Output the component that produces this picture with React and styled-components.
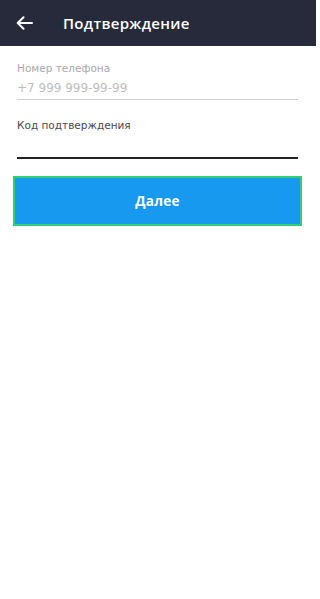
import React from "react";
import styled, { createGlobalStyle } from "styled-components";

const Global = createGlobalStyle`
  html, body { margin: 0; padding: 0; background: #ffffff; }
  body { font-family: "DejaVu Sans", "Noto Sans", sans-serif; }
  * { box-sizing: border-box; }
`;

const Screen = styled.div`
  width: 316px;
  min-height: 599px;
  background: #ffffff;
  display: flex;
  flex-direction: column;
`;

const Header = styled.header`
  height: 46px;
  background: #262a3b;
  display: flex;
  align-items: center;
  padding-left: 16px;
  gap: 30px;
`;

const BackButton = styled.button`
  width: 17px;
  height: 17px;
  padding: 0;
  border: none;
  background: none;
  display: flex;
  align-items: center;
  justify-content: center;
  color: #ffffff;
`;

const Title = styled.h1`
  margin: 0;
  font-family: "Open Sans", "Noto Sans", sans-serif;
  font-size: 15px;
  font-weight: 600;
  color: #ffffff;
  letter-spacing: 0.3px;
`;

const Form = styled.div`
  display: flex;
  flex-direction: column;
  padding: 15px 18px 0 17px;
`;

const Field = styled.div`
  display: flex;
  flex-direction: column;
  margin-bottom: ${(p) => p.$mb || 0}px;
`;

const Label = styled.label`
  font-size: 10.5px;
  line-height: 14px;
  color: ${(p) => (p.$muted ? "#a9a9a9" : "#4a4a4a")};
`;

const Value = styled.div`
  font-size: 12px;
  line-height: 16px;
  margin-top: 5px;
  color: #bdbdbd;
  height: ${(p) => p.$h || 16}px;
  border-bottom: ${(p) => (p.$active ? "2px solid #222222" : "1px solid #cfcfcf")};
`;

const Submit = styled.button`
  margin: 17px 14px 0 13px;
  height: 50px;
  background: #1799f0;
  border: 2px solid #2fcf73;
  color: #ffffff;
  font-family: "Open Sans", "Noto Sans", sans-serif;
  font-size: 13.5px;
  font-weight: 700;
  letter-spacing: 0.3px;
  display: flex;
  align-items: center;
  justify-content: center;
  cursor: pointer;
`;

export default function App() {
  return (
    <Screen>
      <Global />
      <Header>
        <BackButton aria-label="Назад">
          <svg width="17" height="14" viewBox="0 0 17 14" fill="none">
            <path d="M16 7H2M7.5 1.2L1.7 7l5.8 5.8" stroke="#fff" strokeWidth="2" strokeLinecap="round" strokeLinejoin="round" />
          </svg>
        </BackButton>
        <Title>Подтверждение</Title>
      </Header>
      <Form>
        <Field $mb={18}>
          <Label $muted>Номер телефона</Label>
          <Value $h={20}>+7 999 999-99-99</Value>
        </Field>
        <Field>
          <Label>Код подтверждения</Label>
          <Value $active $h={22} />
        </Field>
      </Form>
      <Submit>Далее</Submit>
    </Screen>
  );
}
